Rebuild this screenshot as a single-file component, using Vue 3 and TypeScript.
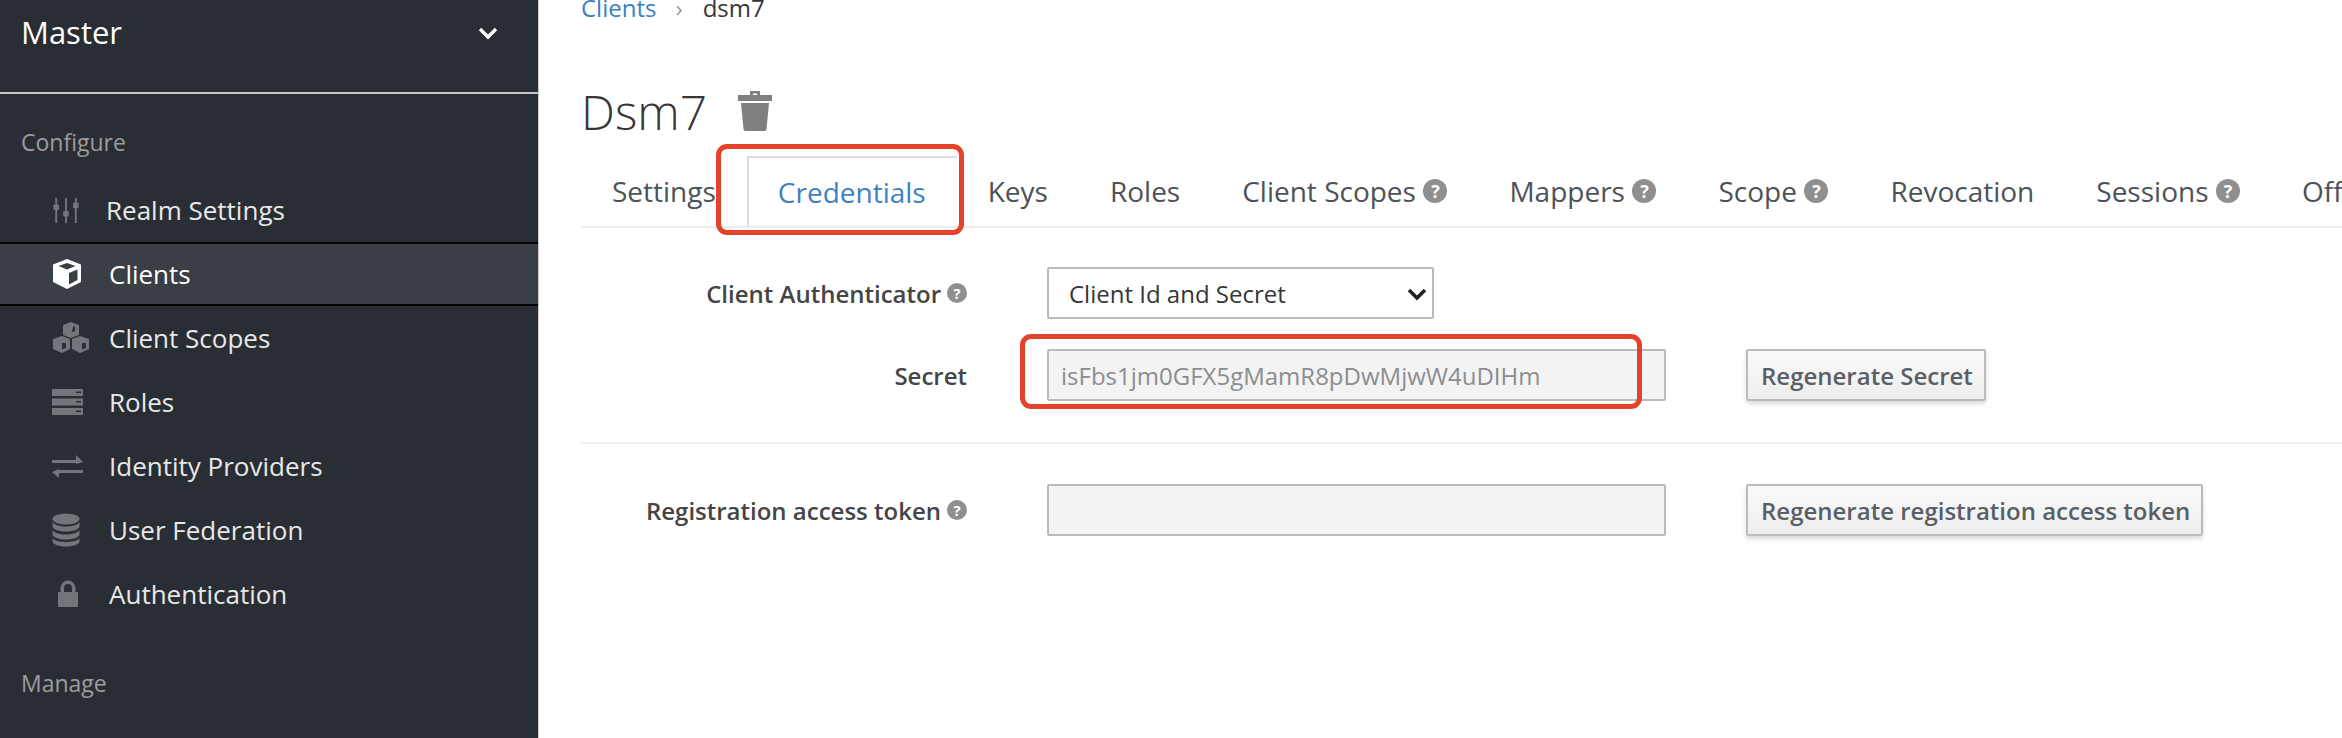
<script setup lang="ts">
interface NavItem { label: string; icon: string; active?: boolean }
const configure: NavItem[] = [
  { label: 'Realm Settings', icon: 'sliders' },
  { label: 'Clients', icon: 'cube', active: true },
  { label: 'Client Scopes', icon: 'cubes' },
  { label: 'Roles', icon: 'server' },
  { label: 'Identity Providers', icon: 'exchange' },
  { label: 'User Federation', icon: 'database' },
  { label: 'Authentication', icon: 'lock' },
]
const tabs = [
  { label: 'Settings' },
  { label: 'Credentials', active: true },
  { label: 'Keys' },
  { label: 'Roles' },
  { label: 'Client Scopes', help: true },
  { label: 'Mappers', help: true },
  { label: 'Scope', help: true },
  { label: 'Revocation' },
  { label: 'Sessions', help: true },
  { label: 'Offline Access', help: true },
]
</script>

<template>
  <div class="page">
    <aside class="sidebar">
      <div class="realm">
        <span class="realm-name">Master</span>
        <svg class="chev" viewBox="0 0 20 14" width="20" height="14"><path d="M2 3l8 8 8-8" fill="none" stroke="#fff" stroke-width="3.4" /></svg>
      </div>
      <div class="group-label first">Configure</div>
      <nav class="nav">
        <div v-for="item in configure" :key="item.label" class="nav-item" :class="{ active: item.active }">
          <span class="nav-icon">
            <svg v-if="item.icon === 'sliders'" viewBox="0 0 30 30" width="28" height="30" fill="currentColor">
              <rect x="3.500" y="2" width="2" height="27" /><rect x="14" y="2" width="2" height="27" /><rect x="24.500" y="2" width="2" height="27" />
              <rect x="1.500" y="9" width="6" height="6" rx="1" /><rect x="12" y="16" width="6" height="6" rx="1" /><rect x="22.500" y="7" width="6" height="6" rx="1" />
            </svg>
            <svg v-else-if="item.icon === 'cube'" viewBox="0 0 30 32" width="30" height="32" fill="#fff">
              <path d="M15 1L29 6.500V24L15 31 1 24V6.500zM15 5L6.500 8 15 11.500 23.500 8zM17 15V26.500L25.500 22V11.500z" fill-rule="evenodd" />
            </svg>
            <svg v-else-if="item.icon === 'cubes'" viewBox="0 0 38 34" width="38" height="34" fill="currentColor">
              <path d="M19 1l8 3v10l-8 3-8-3V4z" />
              <path d="M10 15l8 3v10l-8 4-9-4V18z" />
              <path d="M28 15l9 3v10l-9 4-8-4V18z" />
              <path d="M30 22h4v5l-4 1.500zM10 22h4v5l-4 1.500zM21 6l-1 5 3-1V5z" fill="#292e34" />
            </svg>
            <svg v-else-if="item.icon === 'server'" viewBox="0 0 32 28" width="32" height="28" fill="currentColor">
              <rect y="1" width="31" height="7" /><rect y="10.500" width="31" height="7" /><rect y="20" width="31" height="7" />
              <rect x="24" y="3.500" width="5" height="1.500" fill="#292e34" /><rect x="24" y="13" width="5" height="1.500" fill="#292e34" /><rect x="24" y="22.500" width="5" height="1.500" fill="#292e34" />
            </svg>
            <svg v-else-if="item.icon === 'exchange'" viewBox="0 0 32 26" width="32" height="26" fill="currentColor">
              <path d="M0 7h24V2l7 7-7 2v-1H0zM31 17H7v-1L0 19l7 6v-5h24z" />
            </svg>
            <svg v-else-if="item.icon === 'database'" viewBox="0 0 28 34" width="28" height="34" fill="currentColor">
              <ellipse cx="14" cy="6" rx="13.500" ry="5.500" />
              <path d="M.5 9c2 3 7 4.500 13.500 4.500S25.500 12 27.500 9v5c-2 3-7 4.500-13.500 4.500S2.500 17 .5 14zM.5 17c2 3 7 4.500 13.500 4.500S25.500 20 27.500 17v5c-2 3-7 4.500-13.500 4.500S2.500 25 .5 22zM.5 25c2 3 7 4 13.500 4s11.500-1 13.500-4v4c-2 3-7 4.500-13.500 4.500S2.500 32 .5 29z" />
            </svg>
            <svg v-else class="lock" viewBox="0 0 22 28" width="22" height="28" fill="currentColor">
              <path d="M1 12h2.500V8a7.500 7.500 0 0 1 15 0v4H21v15H1zM7 12h8V8a4 4 0 0 0-8 0z" fill-rule="evenodd" />
            </svg>
          </span>
          <span class="nav-label" :class="{ tight: item.icon === 'sliders' }">{{ item.label }}</span>
        </div>
      </nav>
      <div class="group-label manage">Manage</div>
    </aside>

    <main class="main">
      <div class="crumbs">
        <span class="crumb-link">Clients</span>
        <span class="crumb-sep">›</span>
        <span class="crumb-cur">dsm7</span>
      </div>
      <div class="title-row">
        <h1 class="title">Dsm7</h1>
        <svg class="trash" viewBox="0 0 34 40" width="34" height="40" fill="#7f7f7f">
          <path d="M12 0h10v4h12v6H0V4h12zM15 2.500V4h4V2.500z" fill-rule="evenodd" />
          <path d="M3 12h28l-2.500 26a2 2 0 0 1-2 2h-19a2 2 0 0 1-2-2z" />
        </svg>
      </div>
      <div class="tabs">
        <div v-for="t in tabs" :key="t.label" class="tab" :class="{ active: t.active }">
          <span>{{ t.label }}</span>
          <span v-if="t.help" class="help">?</span>
        </div>
      </div>

      <form class="form" @submit.prevent>
        <div class="row">
          <label class="lbl">Client Authenticator <span class="help small">?</span></label>
          <div class="select-wrap">
            <select class="ctl select">
              <option>Client Id and Secret</option>
            </select>
            <svg class="select-arrow" viewBox="0 0 20 14" width="20" height="14"><path d="M2 3l8 8 8-8" fill="none" stroke="#222" stroke-width="3.600" /></svg>
          </div>
        </div>
        <div class="row second">
          <label class="lbl">Secret</label>
          <input class="ctl input" readonly value="isFbs1jm0GFX5gMamR8pDwMjwW4uDIHm" />
          <button class="btn" type="button">Regenerate Secret</button>
        </div>
        <div class="rule"></div>
        <div class="row">
          <label class="lbl">Registration access token <span class="help small">?</span></label>
          <input class="ctl input" readonly value="" />
          <button class="btn" type="button">Regenerate registration access token</button>
        </div>
      </form>
    </main>

    <div class="mark mark-tab"></div>
    <div class="mark mark-secret"></div>
  </div>
</template>

<style>
html, body { margin: 0; background: #fff; overflow: hidden; }
</style>

<style scoped>
.page {
  position: relative;
  display: flex;
  width: 2342px;
  height: 738px;
  overflow: hidden;
  background: #fff;
  font-family: "Open Sans", "Noto Sans", sans-serif;
  color: #363636;
}
.sidebar {
  width: 539px;
  flex: none;
  box-sizing: border-box;
  background: #292e34;
  border-right: 1px solid #c9c9c9;
  color: #f0f0f0;
}
.realm {
  height: 94px;
  box-sizing: border-box;
  display: flex;
  justify-content: space-between;
  padding: 10px 40px 0 21px;
  border-bottom: 2px solid #c4c4c4;
}
.realm-name { font-size: 31px; line-height: 44px; color: #fff; }
.chev { margin-top: 16px; }
.group-label { font-size: 23px; line-height: 32px; color: #9c9c9c; padding-left: 21px; }
.first { margin-top: 32px; }
.nav { margin-top: 20px; }
.nav-item {
  display: flex;
  align-items: center;
  height: 64px;
  box-sizing: border-box;
  padding-left: 52px;
  font-size: 26px;
  color: #e8e8e8;
  border-top: 2px solid transparent;
  border-bottom: 2px solid transparent;
}
.nav-item.active {
  background: #393f44;
  border-color: #030303;
  color: #fff;
}
.nav-icon {
  width: 57px;
  flex: none;
  display: flex;
  color: #72767b;
}
.lock { margin-left: 5px; }
.nav-label.tight { margin-left: -3px; }
.manage { margin-top: 41px; }

.main { flex: 1; min-width: 0; padding-left: 42px; }
.crumbs {
  height: 16px;
  display: flex;
  align-items: center;
  font-size: 24px;
  line-height: 16px;
  color: #363636;
}
.crumb-link { color: #3a7fc1; }
.crumb-sep { color: #9c9c9c; margin: 0 20px 0 19px; }
.title-row { display: flex; align-items: center; gap: 31px; margin-top: 70px; height: 52px; }
.title { margin: 0; font-size: 48px; font-weight: 300; line-height: 52px; color: #363636; }
.trash { margin-top: -2px; }
.tabs {
  display: flex;
  margin-top: 18px;
  height: 70px;
  border-bottom: 2px solid #ececec;
  white-space: nowrap;
  width: 1900px;
}
.tab {
  display: flex;
  align-items: center;
  gap: 7.5px;
  padding: 0 31px;
  font-size: 28px;
  color: #4d5258;
  box-sizing: border-box;
  height: 70px;
}
.tab.active {
  color: #3f7fc4;
  background: #fff;
  border-top: 2px solid #dcdcdc;
  border-left: 2px solid #dcdcdc;
  padding: 0 31px 0 29px;
}
.help {
  display: inline-flex;
  align-items: center;
  justify-content: center;
  width: 24px;
  height: 24px;
  border-radius: 50%;
  background: #8f8f8f;
  color: #fff;
  font-size: 18px;
  font-weight: 700;
  line-height: 1;
}
.help.small { width: 20px; height: 20px; font-size: 15px; margin-left: 2px; }

.form { width: 1761px; margin-top: 39px; }
.row { display: flex; align-items: center; height: 52px; }
.second { margin-top: 30px; }
.lbl {
  width: 386px;
  flex: none;
  text-align: right;
  font-size: 24px;
  font-weight: 600;
  color: #454545;
  white-space: nowrap;
  display: flex;
  justify-content: flex-end;
  align-items: center;
  gap: 4px;
}
.ctl {
  box-sizing: border-box;
  height: 52px;
  border: 2px solid #bbb;
  border-radius: 2px;
  font-family: inherit;
  font-size: 24px;
  color: #363636;
  margin: 0;
}
.select-wrap { position: relative; margin-left: 80px; display: flex; }
.select { width: 387px; background: #fff; padding: 0 20px; appearance: none; }
.select-arrow { position: absolute; right: 7px; top: 20px; }
.input { width: 619px; margin-left: 80px; background: #f3f3f3; color: #8b8d8f; padding: 0 12px; outline: none; }
.btn {
  margin-left: 80px;
  height: 52px;
  box-sizing: border-box;
  padding: 0 11px 0 13px;
  border: 2px solid #bbb;
  border-radius: 2px;
  background: linear-gradient(#fafafa, #ededed);
  box-shadow: 0 3px 4px rgba(0, 0, 0, 0.14);
  font-family: inherit;
  font-size: 24px;
  font-weight: 600;
  color: #5a5f65;
  white-space: nowrap;
}
.rule { height: 2px; background: #efefef; margin: 41px 0 40px; width: 1800px; }

.mark {
  position: absolute;
  box-sizing: border-box;
  border: 5px solid #e5422b;
  border-radius: 11px;
  pointer-events: none;
}
.mark-tab { left: 716px; top: 144px; width: 248px; height: 91px; }
.mark-secret { left: 1020px; top: 334px; width: 622px; height: 75px; }
</style>
